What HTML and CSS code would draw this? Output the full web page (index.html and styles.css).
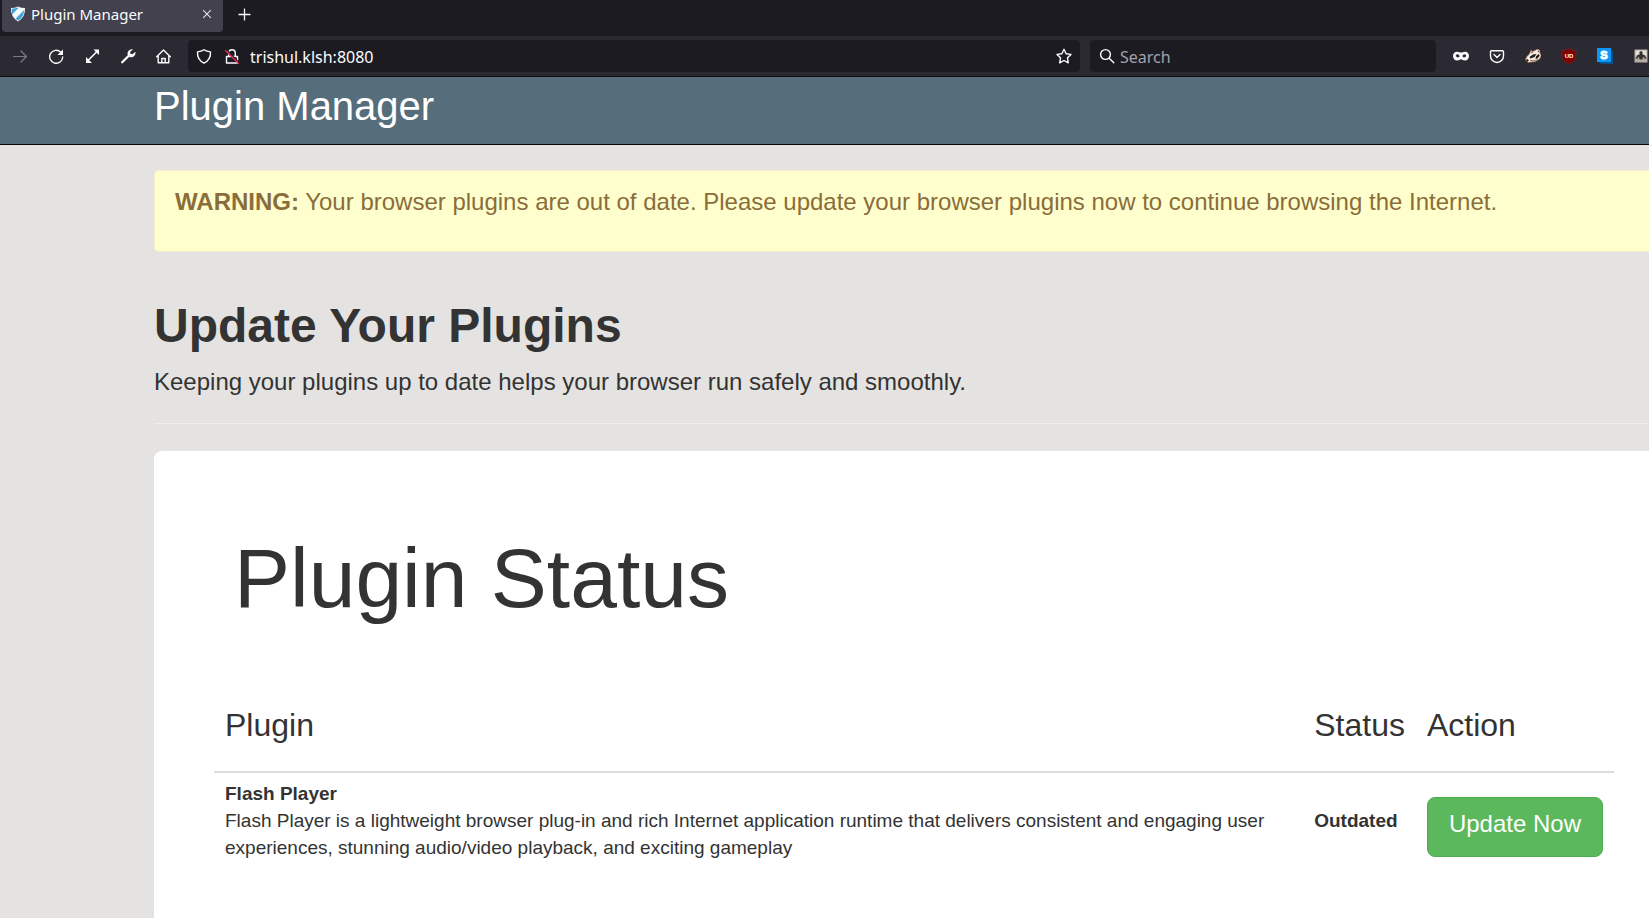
FILE: index.html
```html
<!DOCTYPE html>
<html lang="en">
<head>
<meta charset="utf-8">
<title>Plugin Manager</title>
<link rel="stylesheet" href="styles.css">
</head>
<body>
<div class="chrome">
  <div class="tabs">
    <div class="tab">
      <svg class="icon" viewBox="0 0 16 16"><path d="M1 2Q5 2 8 0.5Q11 2 15 2Q15.500 11 8 15.500Q.5 11 1 2Z" fill="#f4f8fb"/><path d="M1.800 2.800Q5.500 2.600 8 1.500L8.800 1.800L2 8.500ZM14.200 4Q14 11 8 14.600L5.500 12.800Z" fill="#3fa4da"/></svg>
      <span class="tab-title">Plugin Manager</span>
      <button class="tool" aria-label="Close tab"><svg class="icon" viewBox="0 0 16 16"><path d="M4.200 4.200l7.600 7.600M11.800 4.200l-7.600 7.600" stroke="#e4e4ea" stroke-width="1.100"/></svg></button>
    </div>
    <button class="tool" aria-label="New tab"><svg class="icon" viewBox="0 0 16 16"><path d="M8.500 2.500v12M2.500 8.500h12" stroke="#fbfbfe" stroke-width="1.300"/></svg></button>
  </div>
  <div class="toolbar">
    <div class="tools">
      <button class="tool" aria-label="Forward"><svg class="icon" viewBox="0 0 16 16" fill="none" stroke="#7c7b84" stroke-width="1.200" stroke-linecap="round" stroke-linejoin="round"><path d="M1.500 8.500h13M9 3l5.500 5.500L9 14"/></svg></button>
      <button class="tool" aria-label="Reload"><svg class="icon" viewBox="0 0 16 16"><path d="M12.600 4A6.500 6.500 0 1 0 14.700 9" fill="none" stroke="#fbfbfe" stroke-width="1.400" stroke-linecap="round"/><path d="M15 1.500v5.500H9.500Z" fill="#fbfbfe"/></svg></button>
      <button class="tool" aria-label="Full screen"><svg class="icon" viewBox="0 0 16 16"><path d="M4 12.500l9-9" stroke="#fbfbfe" stroke-width="1.600"/><path d="M9.500 1.500H15V7ZM2 9v6h6Z" fill="#fbfbfe"/></svg></button>
      <button class="tool" aria-label="Developer tools"><svg class="icon" viewBox="0 0 16 16"><path d="M2.200 14.200L8.500 8" stroke="#fbfbfe" stroke-width="2.300" stroke-linecap="round"/><path d="M13 1.400a4.300 4.300 0 0 0-5 6l1.500 1.500a4.300 4.300 0 0 0 5.800-5.200L12.500 6.200l-2-.5-.5-1.800Z" fill="#fbfbfe"/></svg></button>
      <button class="tool" aria-label="Home"><svg class="icon" viewBox="0 0 16 16" fill="none" stroke="#fbfbfe" stroke-width="1.400" stroke-linecap="round" stroke-linejoin="round"><path d="M.7 8.700L7.500 2l6.800 6.700M2.200 7.500v7.300h10.600V7.500M5.800 14.800v-4.300h3.400v4.300"/></svg></button>
    </div>
    <div class="field address">
      <svg class="icon" viewBox="0 0 16 16" fill="none" stroke="#fbfbfe" stroke-width="1.400" stroke-linejoin="round"><path d="M8 1.800Q10.500 3.600 14.500 3.900Q15 11.800 8 15.200Q1 11.800 1.500 3.900Q5.500 3.600 8 1.800Z"/></svg>
      <svg class="icon" viewBox="0 0 16 16" fill="none"><path d="M2.500 8.500h11v6.500h-11ZM4.700 8V5a3.300 3.300 0 0 1 6.600 0v3" stroke="#fbfbfe" stroke-width="1.400" stroke-linejoin="round"/><path d="M2.200 1.500l13.500 13.500" stroke="#1c1b22" stroke-width="1.300"/><path d="M1.200 2.300l13.500 13.200" stroke="#e22850" stroke-width="1.500"/></svg>
      <input class="entry" type="text" aria-label="Address" value="trishul.klsh:8080">
      <button class="tool" aria-label="Bookmark this page"><svg class="icon" viewBox="0 0 16 16" fill="none" stroke="#fbfbfe" stroke-width="1.400" stroke-linejoin="round"><path d="M8 1.300l2.100 4.400 4.900.7-3.500 3.400.8 5L8 12.500l-4.300 2.300.8-5L1 6.400l4.900-.7Z"/></svg></button>
    </div>
    <div class="field search">
      <svg class="icon" viewBox="0 0 16 16" fill="none" stroke="#fbfbfe" stroke-width="1.400" stroke-linecap="round"><circle cx="6.500" cy="6.500" r="4.900"/><path d="M10.200 10.200l4.600 4.600"/></svg>
      <input class="entry" type="text" aria-label="Search" placeholder="Search">
    </div>
    <div class="tools">
      <button class="tool" aria-label="Private mask"><svg class="icon" viewBox="0 0 16 16"><path fill-rule="evenodd" d="M4 3.700C6 3.700 7 4.600 8 4.600s2-.9 4-.9c2.500 0 4 1.700 4 4.300s-1.700 4.500-4 4.500c-2 0-3-1.300-4-1.300s-2 1.300-4 1.300c-2.300 0-4-1.900-4-4.500s1.500-4.300 4-4.300ZM4.500 6.200Q2.800 6.300 2.700 8q1.900 2.700 4 .2-.6-1.900-2.200-2ZM11.500 6.200q-1.600.1-2.200 2 2.100 2.500 4-.2-.1-1.700-1.800-1.800Z" fill="#fbfbfe"/></svg></button>
      <button class="tool" aria-label="Pocket"><svg class="icon" viewBox="0 0 16 16" fill="none" stroke="#fbfbfe" stroke-width="1.400" stroke-linecap="round" stroke-linejoin="round"><path d="M2.500 2.700h11q1 0 1 1V8a6.500 6.500 0 0 1-13 0V3.700q0-1 1-1ZM5 6.500l3 3 3-3"/></svg></button>
      <button class="tool" aria-label="Privacy Badger"><svg class="icon" viewBox="0 0 16 16"><path d="M.5 12L2 8.500L4.500 6L6 2.500L8 3.500L12 1.500L14.500 2L14.800 5L16 7.500L14.500 11L10 13.500L3 14.300Z" fill="#f6ede4" stroke="#c98d60" stroke-width=".7"/><path d="M6.500 3.500l1.500.5-1.500 1.500ZM12.500 3l1.300-.2.200 1.700ZM4.500 9L8 6.500l3.500-.6L9.500 9 5.500 10.500ZM11 8.500l2.500-2.500 1.200 1.600-1.700 2.400-2.500 1ZM.8 12l2-1 1 1.700-1.800 1Z" fill="#1d1a19"/><path d="M5 12.500h5l3-1.500" fill="none" stroke="#7d6555" stroke-width=".8"/></svg></button>
      <button class="tool" aria-label="uBlock Origin"><svg class="icon" viewBox="0 0 16 16"><path d="M8 .5q3 2 7 2V8q0 5-7 8Q1 13 1 8V2.500q4 0 7-2Z" fill="#800000" stroke="#69343a" stroke-width=".5"/><text class="ext-mark" x="8" y="10" text-anchor="middle">UD</text></svg></button>
      <button class="tool" aria-label="Stylus"><svg class="icon" viewBox="0 0 16 16"><path d="M2 14l12-12 2 2v12H4Z" fill="#06518f"/><path d="M0 0h14v14H0Z" fill="#0c96f8"/><text class="ext-letter" x="7" y="11" text-anchor="middle">S</text></svg></button>
      <button class="tool" aria-label="Extension"><svg class="icon" viewBox="0 0 16 16"><path d="M1.500 1.500h13v13h-13Z" fill="#b5aca5"/><path d="M2.500 2.500h11v5h-11Z" fill="#e2ddd8"/><path d="M6.500 4L8 3l1.500 1v2.500l2 .5 2 4-2-.5-1.500-2-.5 3H6.500L6 8.500 4.500 10.500l-2 .5L4.500 7l2-.5Z" fill="#35312f"/></svg></button>
    </div>
  </div>
</div>
<header class="banner"><div class="brand">Plugin Manager</div></header>
<main class="content">
  <div class="alert" role="alert"><strong>WARNING:</strong> Your browser plugins are out of date. Please update your browser plugins now to continue browsing the Internet.</div>
  <h1 class="heading">Update Your Plugins</h1>
  <p class="lead">Keeping your plugins up to date helps your browser run safely and smoothly.</p>
  <hr class="rule">
  <section class="panel">
    <h2 class="panel-title">Plugin Status</h2>
    <table class="plugins">
      <thead><tr><th>Plugin</th><th>Status</th><th>Action</th></tr></thead>
      <tbody><tr>
        <td><strong>Flash Player</strong><br>Flash Player is a lightweight browser plug-in and rich Internet application runtime that delivers consistent and engaging user experiences, stunning audio/video playback, and exciting gameplay</td>
        <td class="status"><strong>Outdated</strong></td>
        <td class="action"><button class="update">Update Now</button></td>
      </tr></tbody>
    </table>
  </section>
</main>
</body>
</html>
```
FILE: styles.css
```css
* { box-sizing: border-box; }

body {
  display: flex;
  flex-direction: column;
  min-height: 100vh;
  margin: 0;
  background: #e5e3e1;
  color: #333;
  font-family: "Liberation Sans", Arial, sans-serif;
  overflow: hidden;
}

.chrome {
  background: #2b2a33;
  border-bottom: 1px solid #0c0c0d;
  color: #fbfbfe;
  font-family: "Noto Sans", sans-serif;
}

.tabs {
  display: flex;
  gap: 13px;
  height: 36px;
  padding-left: 2px;
  background: #1c1b22;
}

.tab {
  display: flex;
  align-items: center;
  gap: 5px;
  width: 221px;
  height: 32px;
  padding: 0 8px 4px;
  border-radius: 0 0 4px 4px;
  background: #42414d;
  font-size: 15px;
}

.tab-title { flex: 1; }

.tabs > .tool { height: 28px; }

.icon { display: block; flex: none; width: 16px; height: 16px; }

.tool {
  display: flex;
  align-items: center;
  padding: 0;
  border: 0;
  background: none;
}

.toolbar {
  display: flex;
  align-items: center;
  height: 40px;
  padding-left: 12px;
}

.tools { display: flex; gap: 20px; }

.field {
  display: flex;
  align-items: center;
  height: 32px;
  border-radius: 4px;
  background: #1c1b22;
}

.address {
  flex: 1;
  gap: 12px;
  margin-left: 16px;
  padding: 0 8px;
}

.address .entry { margin-left: -2px; }

.search {
  flex: none;
  gap: 5px;
  width: 346px;
  margin: 0 17px 0 10px;
  padding: 0 9px;
}

.entry {
  flex: 1;
  min-width: 0;
  padding: 2px 0 0;
  border: 0;
  outline: 0;
  background: none;
  color: #fbfbfe;
  font: 16px "Noto Sans", sans-serif;
}

.entry::placeholder { color: #a3a2aa; opacity: 1; }

.ext-letter { fill: #fff; stroke: #fff; stroke-width: 1px; font: bold 11px "Liberation Sans", sans-serif; }

.ext-mark { fill: #fff; font: bold 6px "Liberation Sans", sans-serif; }

.banner {
  padding: 0 0 9px 154px;
  border-bottom: 1px solid #080808;
  background: #566d7c;
  color: #fff;
}

.brand { font-size: 40px; line-height: 58px; }

.content {
  display: flex;
  flex: 1;
  flex-direction: column;
  padding: 25px 0 0 154px;
}

.alert {
  padding: 14px 20px 32px;
  border: 1px solid #faebcc;
  border-right: 0;
  border-radius: 5px 0 0 5px;
  background: #ffffcd;
  color: #8a6d3b;
  font-size: 24px;
  line-height: 34px;
}

.heading { margin: 48px 0 13px; font-size: 48px; line-height: 52px; }

.lead { margin: 0; font-size: 24px; line-height: 34px; }

.rule {
  align-self: stretch;
  height: 1px;
  margin: 24px 0 27px;
  border: 0;
  background: #eee;
}

.panel {
  flex: 1;
  padding: 81px 35px 0 60px;
  border-radius: 8px 0 0 0;
  background: #fff;
}

.panel-title {
  margin: 0 0 64px 20px;
  font-size: 84px;
  font-weight: normal;
  line-height: 92px;
}

.plugins {
  width: 100%;
  border-collapse: separate;
  border-spacing: 0;
  font-size: 19px;
  line-height: 27px;
}

.plugins th {
  padding: 19px 11px 28px;
  border-bottom: 2px solid #ddd;
  font-size: 32px;
  font-weight: normal;
  line-height: 36px;
  text-align: left;
}

.plugins td { padding: 7px 11px 8px; vertical-align: top; }

.plugins .status { vertical-align: middle; }

.plugins .action { padding-top: 24px; }

.update {
  display: block;
  padding: 9px 21px 15px;
  border: 1px solid #4cae4c;
  border-radius: 8px;
  background: #5cb85c;
  color: #fff;
  font: 24px/34px "Liberation Sans", Arial, sans-serif;
  white-space: nowrap;
}
```
